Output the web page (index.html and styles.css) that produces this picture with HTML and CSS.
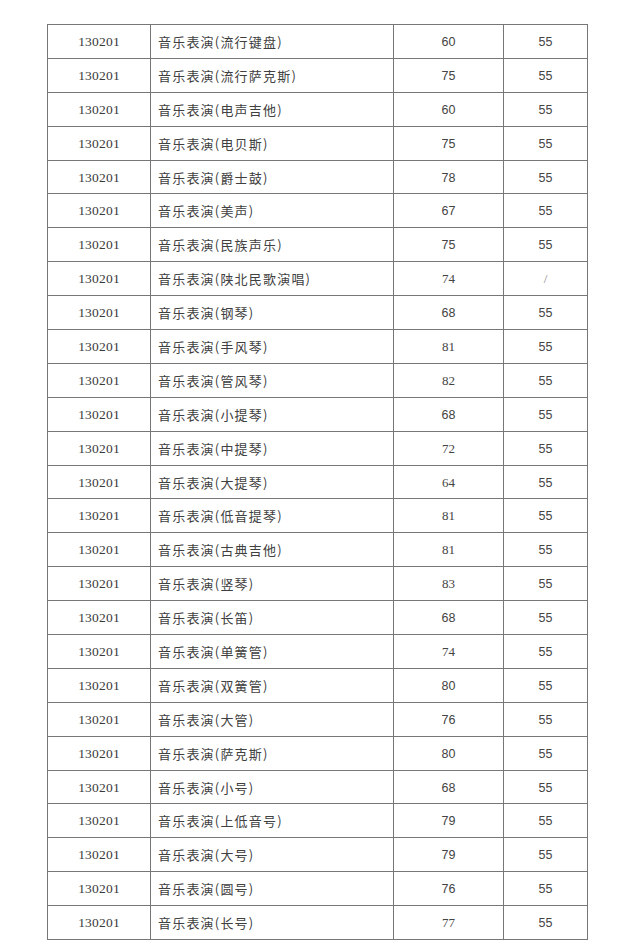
FILE: index.html
```html
<!DOCTYPE html>
<html lang="zh-CN">
<head>
<meta charset="utf-8">
<title>音乐表演</title>
<link rel="stylesheet" href="styles.css">
</head>
<body>
<div class="page">
<table class="scores">
<colgroup><col class="c1"><col class="c2"><col class="c3"><col class="c4"></colgroup>
<tbody>
<tr><td class="code">130201</td><td class="name">音乐表演(流行键盘)</td><td class="num">60</td><td class="num">55</td></tr>
<tr><td class="code">130201</td><td class="name">音乐表演(流行萨克斯)</td><td class="num">75</td><td class="num">55</td></tr>
<tr><td class="code">130201</td><td class="name">音乐表演(电声吉他)</td><td class="num">60</td><td class="num">55</td></tr>
<tr><td class="code">130201</td><td class="name">音乐表演(电贝斯)</td><td class="num">75</td><td class="num">55</td></tr>
<tr><td class="code">130201</td><td class="name">音乐表演(爵士鼓)</td><td class="num">78</td><td class="num">55</td></tr>
<tr><td class="code">130201</td><td class="name">音乐表演(美声)</td><td class="num">67</td><td class="num">55</td></tr>
<tr><td class="code">130201</td><td class="name">音乐表演(民族声乐)</td><td class="num">75</td><td class="num">55</td></tr>
<tr><td class="code">130201</td><td class="name">音乐表演(陕北民歌演唱)</td><td class="num serif">74</td><td class="num serif light">/</td></tr>
<tr><td class="code">130201</td><td class="name">音乐表演(钢琴)</td><td class="num">68</td><td class="num">55</td></tr>
<tr><td class="code">130201</td><td class="name">音乐表演(手风琴)</td><td class="num serif">81</td><td class="num">55</td></tr>
<tr><td class="code">130201</td><td class="name">音乐表演(管风琴)</td><td class="num serif">82</td><td class="num">55</td></tr>
<tr><td class="code">130201</td><td class="name">音乐表演(小提琴)</td><td class="num">68</td><td class="num">55</td></tr>
<tr><td class="code">130201</td><td class="name">音乐表演(中提琴)</td><td class="num serif">72</td><td class="num">55</td></tr>
<tr><td class="code">130201</td><td class="name">音乐表演(大提琴)</td><td class="num serif">64</td><td class="num">55</td></tr>
<tr><td class="code">130201</td><td class="name">音乐表演(低音提琴)</td><td class="num serif">81</td><td class="num">55</td></tr>
<tr><td class="code">130201</td><td class="name">音乐表演(古典吉他)</td><td class="num serif">81</td><td class="num">55</td></tr>
<tr><td class="code">130201</td><td class="name">音乐表演(竖琴)</td><td class="num serif">83</td><td class="num">55</td></tr>
<tr><td class="code">130201</td><td class="name">音乐表演(长笛)</td><td class="num">68</td><td class="num">55</td></tr>
<tr><td class="code">130201</td><td class="name">音乐表演(单簧管)</td><td class="num serif">74</td><td class="num">55</td></tr>
<tr><td class="code">130201</td><td class="name">音乐表演(双簧管)</td><td class="num">80</td><td class="num">55</td></tr>
<tr><td class="code">130201</td><td class="name">音乐表演(大管)</td><td class="num">76</td><td class="num">55</td></tr>
<tr><td class="code">130201</td><td class="name">音乐表演(萨克斯)</td><td class="num">80</td><td class="num">55</td></tr>
<tr><td class="code">130201</td><td class="name">音乐表演(小号)</td><td class="num">68</td><td class="num">55</td></tr>
<tr><td class="code">130201</td><td class="name">音乐表演(上低音号)</td><td class="num">79</td><td class="num">55</td></tr>
<tr><td class="code">130201</td><td class="name">音乐表演(大号)</td><td class="num">79</td><td class="num">55</td></tr>
<tr><td class="code">130201</td><td class="name">音乐表演(圆号)</td><td class="num">76</td><td class="num">55</td></tr>
<tr><td class="code">130201</td><td class="name">音乐表演(长号)</td><td class="num serif">77</td><td class="num">55</td></tr>
</tbody>
</table>
</div>
</body>
</html>
```

FILE: styles.css
```css
html, body {
  margin: 0;
  padding: 0;
  background: #ffffff;
}

.page {
  padding: 24px 0 0 47px;
}

.scores {
  border-collapse: collapse;
  table-layout: fixed;
  width: 540px;
  color: #3a3a3a;
}

.c1 { width: 103px; }
.c2 { width: 243px; }
.c3 { width: 110px; }
.c4 { width: 84px; }

.scores tr {
  height: 33.9px;
}

.scores td {
  border: 1px solid #777777;
  padding: 1px 0 0 0;
  vertical-align: middle;
  line-height: 16px;
}

.code {
  text-align: center;
  font-family: "Liberation Serif", serif;
  font-size: 13.5px;
  letter-spacing: 0.2px;
}

.scores td.name {
  text-align: left;
  padding-left: 7px;
  font-family: "Noto Sans CJK SC", sans-serif;
  font-size: 13px;
  letter-spacing: 1.2px;
  color: #404040;
}

.num {
  text-align: center;
  font-family: "Liberation Sans", sans-serif;
  font-size: 12.5px;
  color: #444444;
}

.num.serif {
  font-family: "Liberation Serif", serif;
  font-size: 13px;
}

.num.light {
  color: #888888;
}
```
